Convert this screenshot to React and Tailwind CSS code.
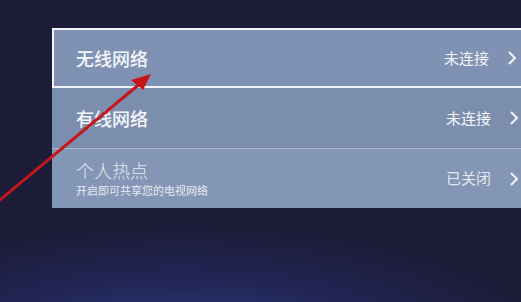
import React from 'react';

const rows = [
  { title: '无线网络', status: '未连接', focused: true },
  { title: '有线网络', status: '未连接' },
  { title: '个人热点', sub: '开启即可共享您的电视网络', status: '已关闭' },
];

function Chevron() {
  return (
    <svg width="12" height="16" viewBox="0 0 12 16" className="shrink-0">
      <path d="M3 2 L9 8 L3 14" fill="none" stroke="#f1f3f8" strokeWidth="2" />
    </svg>
  );
}

export default function App() {
  return (
    <div
      className="relative w-[521px] h-[302px] overflow-hidden bg-[radial-gradient(ellipse_70%_40%_at_35%_115%,#2b3f8a_0%,#222656_55%,#1c1b38_100%)]"
      style={{ fontFamily: '"Noto Sans CJK SC", "Noto Sans", sans-serif' }}
    >
      <div className="pt-[28px] pl-[52px]">
        <div className="w-[480px] bg-[#7c8eae]">
          {rows.map((r, i) => (
            <div
              key={i}
              className={
                'flex items-center h-[60px] pr-[12px] ' +
                (r.focused
                  ? 'border-2 border-[#f2f4f8] bg-[#8092b3] pl-[22px]'
                  : i === 2
                  ? 'border-t border-[#a9b6cc] bg-[#8496b5] pl-[24px]'
                  : 'pl-[24px]')
              }
            >
              <div className="flex-1 flex flex-col">
                <span
                  className={
                    'leading-none ' +
                    (i === 2
                      ? 'text-[18px] text-[#e3e8f0] font-light'
                      : 'text-[18px] text-[#f4f6fa] font-medium')
                  }
                >
                  {r.title}
                </span>
                {r.sub && (
                  <span className="mt-[6px] text-[11px] leading-none text-[#e6eaf2]">{r.sub}</span>
                )}
              </div>
              <span
                className={
                  'text-[15px] mr-[17px] ' +
                  (i === 2 ? 'text-[#e3e8f0]' : 'text-[#f4f6fa]')
                }
              >
                {r.status}
              </span>
              <Chevron />
            </div>
          ))}
        </div>
      </div>

      <svg className="absolute left-0 top-0 pointer-events-none" width="521" height="302">
        <line x1="-5" y1="204" x2="142" y2="82" stroke="#c4161c" strokeWidth="3" />
        <path d="M151 74 L131 80 L143 90 Z" fill="#c4161c" />
      </svg>
    </div>
  );
}
